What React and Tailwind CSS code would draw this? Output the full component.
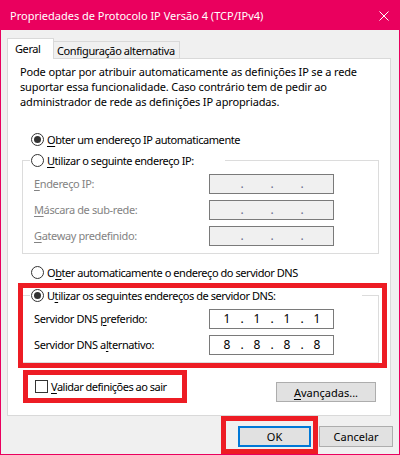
import React from "react";

function Radio({ checked, children }) {
  return (
    <div className="flex items-center h-[15px]">
      <div className="w-[13px] h-[13px] rounded-full border border-[#333333] bg-white flex items-center justify-center shrink-0">
        {checked && <div className="w-[7px] h-[7px] rounded-full bg-[#333333]" />}
      </div>
      <span className="ml-[3px] leading-[15px] whitespace-nowrap tracking-[-0.45px]">{children}</span>
    </div>
  );
}

function IpBox({ values, disabled }) {
  const parts = values || ["", "", "", ""];
  return (
    <div
      className={
        "w-[125px] h-[20px] border border-[#7a7a7a] flex items-center pl-[5px] tracking-normal text-[12px] " +
        (disabled ? "bg-[#f0f0f0] text-[#6d6d8d]" : "bg-white text-black")
      }
    >
      {parts.map((p, i) => (
        <React.Fragment key={i}>
          <span className="w-[24px] text-center leading-[18px]">{p}</span>
          {i < 3 && <span className="w-[6px] text-center leading-[18px]">.</span>}
        </React.Fragment>
      ))}
    </div>
  );
}

export default function App() {
  return (
    <div className="relative w-[400px] h-[455px] border border-[#ea005e] bg-[#f0f0f0] font-['Segoe_UI','Noto_Sans',sans-serif] text-[11px] text-black overflow-hidden">
      {/* Title bar */}
      <div className="h-[29px] bg-[#ea005e] flex items-center justify-between pl-[9px] pr-[10px] text-white">
        <span className="leading-[16px] whitespace-nowrap">Propriedades de Protocolo IP Versão 4 (TCP/IPv4)</span>
        <svg width="10" height="10" viewBox="0 0 10 10">
          <path d="M0.5 0.5 L9.5 9.5 M9.5 0.5 L0.5 9.5" stroke="white" strokeWidth="1" />
        </svg>
      </div>

      {/* Body */}
      <div className="pl-[6px] pt-[8px]">
        {/* Tabs */}
        <div className="flex items-end h-[20px] tracking-[-0.4px]">
          <div className="relative z-10 w-[47px] h-[21px] -mb-[1px] bg-white border border-b-0 border-[#d9d9d9] flex items-center pl-[7px]">
            <span className="leading-[15px] -mt-[1px]">Geral</span>
          </div>
          <div className="w-[126px] h-[17px] bg-[#f0f0f0] border border-l-0 border-b-0 border-[#d9d9d9] flex items-center pl-[3px]">
            <span className="leading-[15px] whitespace-nowrap">Configuração alternativa</span>
          </div>
        </div>

        {/* Panel */}
        <div className="w-[384px] h-[358px] bg-white border border-[#d9d9d9] flex flex-col">
          <p className="ml-[12px] mt-[5px] leading-[15px] w-[350px] tracking-[-0.15px]">
            Pode optar por atribuir automaticamente as definições IP se a rede suportar essa funcionalidade. Caso contrário tem de pedir ao administrador de rede as definições IP apropriadas.
          </p>

          <div className="ml-[23px] mt-[23px]">
            <Radio checked>
              <u className="underline-offset-2">O</u>bter um endereço IP automaticamente
            </Radio>
          </div>

          <fieldset className="ml-[14px] mt-[6px] w-[357px] border border-[#dcdcdc] pb-[7px]">
            <legend className="ml-[7px] w-[195px] px-0 bg-white">
              <div className="pl-[1px]">
                <Radio>
                  <u className="underline-offset-2">U</u>tilizar o seguinte endereço IP:
                </Radio>
              </div>
            </legend>
            <div className="flex flex-col gap-[6px] mt-[6px] pl-[11px] text-[#838383] tracking-[-0.38px]">
              <div className="flex items-center h-[20px]">
                <span className="w-[175px]"><u className="underline-offset-2">E</u>ndereço IP:</span>
                <IpBox disabled />
              </div>
              <div className="flex items-center h-[20px]">
                <span className="w-[175px]"><u className="underline-offset-2">M</u>áscara de sub-rede:</span>
                <IpBox disabled />
              </div>
              <div className="flex items-center h-[20px]">
                <span className="w-[175px]"><u className="underline-offset-2">G</u>ateway predefinido:</span>
                <IpBox disabled />
              </div>
            </div>
          </fieldset>

          <div className="ml-[23px] mt-[11px]">
            <Radio>
              O<u className="underline-offset-2">b</u>ter automaticamente o endereço do servidor DNS
            </Radio>
          </div>

          <fieldset className="ml-[14px] mt-[8px] w-[357px] border border-[#dcdcdc] pb-[7px]">
            <legend className="ml-[7px] w-[332px] px-0 bg-white">
              <div className="pl-[1px]">
                <Radio checked>
                  U<u className="underline-offset-2">t</u>ilizar os seguintes endereços de servidor DNS:
                </Radio>
              </div>
            </legend>
            <div className="flex flex-col gap-[6px] mt-[6px] pl-[11px] tracking-[-0.4px]">
              <div className="flex items-center h-[20px]">
                <span className="w-[175px]">Servidor DNS <u className="underline-offset-2">p</u>referido:</span>
                <IpBox values={["1", "1", "1", "1"]} />
              </div>
              <div className="flex items-center h-[20px]">
                <span className="w-[175px]">Servidor DNS a<u className="underline-offset-2">l</u>ternativo:</span>
                <IpBox values={["8", "8", "8", "8"]} />
              </div>
            </div>
          </fieldset>

          <div className="flex items-start justify-between mt-[17px] ml-[27px] mr-[14px]">
            <div className="flex items-center h-[13px]">
              <div className="w-[13px] h-[13px] border border-[#333333] bg-white shrink-0" />
              <span className="ml-[3px] leading-[15px] whitespace-nowrap tracking-[-0.5px]">
                <u className="underline-offset-2">V</u>alidar definições ao sair
              </span>
            </div>
            <button className="mt-[2px] w-[100px] h-[20px] bg-[#e1e1e1] border border-[#adadad] flex items-center justify-center leading-[15px]">
              <span><u className="underline-offset-2">A</u>vançadas...</span>
            </button>
          </div>
        </div>

        {/* Bottom buttons */}
        <div className="flex justify-end gap-[8px] mt-[10px] pr-[6px]">
          <button className="w-[73px] h-[21px] bg-[#e1e1e1] border-2 border-[#0078d7] flex items-center justify-center leading-[15px]">
            OK
          </button>
          <button className="w-[74px] h-[21px] bg-[#e1e1e1] border border-[#adadad] flex items-center justify-center leading-[15px]">
            Cancelar
          </button>
        </div>
      </div>

      {/* Red annotation boxes */}
      <div className="absolute left-[17px] top-[282px] w-[369px] h-[85px] border-[5px] border-[#ed1c24] pointer-events-none" />
      <div className="absolute left-[22px] top-[369px] w-[164px] h-[33px] border-[5px] border-[#ed1c24] pointer-events-none" />
      <div className="absolute left-[220px] top-[415px] w-[97px] h-[38px] border-[5px] border-[#ed1c24] pointer-events-none" />
    </div>
  );
}
